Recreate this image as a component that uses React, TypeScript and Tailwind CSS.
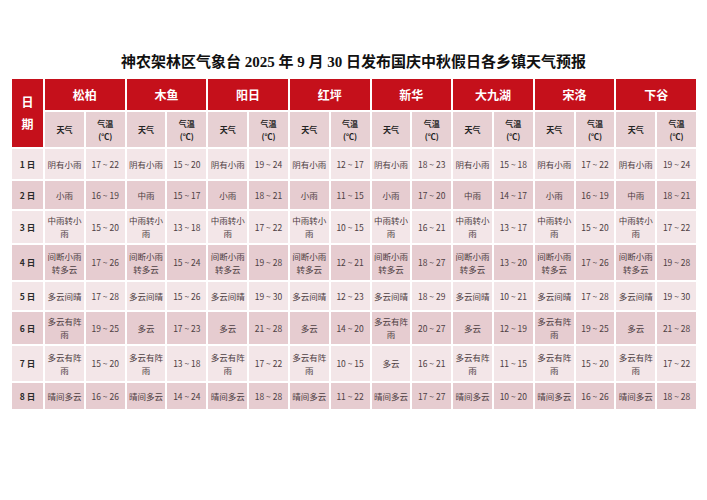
const towns = ['松柏', '木鱼', '阳日', '红坪', '新华', '大九湖', '宋洛', '下谷'];

// each row: [weather, temp] for every town, left to right
const rows: { day: string; h: string; cells: [string, string][] }[] = [
  {
    day: '1日',
    h: 'h-[30px]',
    cells: [
      ['阴有小雨', '17 ~ 22'], ['阴有小雨', '15 ~ 20'], ['阴有小雨', '19 ~ 24'], ['阴有小雨', '12 ~ 17'],
      ['阴有小雨', '18 ~ 23'], ['阴有小雨', '15 ~ 18'], ['阴有小雨', '17 ~ 22'], ['阴有小雨', '19 ~ 24'],
    ],
  },
  {
    day: '2日',
    h: 'h-[28px]',
    cells: [
      ['小雨', '16 ~ 19'], ['中雨', '15 ~ 17'], ['小雨', '18 ~ 21'], ['小雨', '11 ~ 15'],
      ['小雨', '17 ~ 20'], ['中雨', '14 ~ 17'], ['小雨', '16 ~ 19'], ['中雨', '18 ~ 21'],
    ],
  },
  {
    day: '3日',
    h: 'h-[32px]',
    cells: [
      ['中雨转小雨', '15 ~ 20'], ['中雨转小雨', '13 ~ 18'], ['中雨转小雨', '17 ~ 22'], ['中雨转小雨', '10 ~ 15'],
      ['中雨转小雨', '16 ~ 21'], ['中雨转小雨', '13 ~ 17'], ['中雨转小雨', '15 ~ 20'], ['中雨转小雨', '17 ~ 22'],
    ],
  },
  {
    day: '4日',
    h: 'h-[35px]',
    cells: [
      ['间断小雨转多云', '17 ~ 26'], ['间断小雨转多云', '15 ~ 24'], ['间断小雨转多云', '19 ~ 28'], ['间断小雨转多云', '12 ~ 21'],
      ['间断小雨转多云', '18 ~ 27'], ['间断小雨转多云', '13 ~ 20'], ['间断小雨转多云', '17 ~ 26'], ['间断小雨转多云', '19 ~ 28'],
    ],
  },
  {
    day: '5日',
    h: 'h-[28px]',
    cells: [
      ['多云间晴', '17 ~ 28'], ['多云间晴', '15 ~ 26'], ['多云间晴', '19 ~ 30'], ['多云间晴', '12 ~ 23'],
      ['多云间晴', '18 ~ 29'], ['多云间晴', '10 ~ 21'], ['多云间晴', '17 ~ 28'], ['多云间晴', '19 ~ 30'],
    ],
  },
  {
    day: '6日',
    h: 'h-[32px]',
    cells: [
      ['多云有阵雨', '19 ~ 25'], ['多云', '17 ~ 23'], ['多云', '21 ~ 28'], ['多云', '14 ~ 20'],
      ['多云有阵雨', '20 ~ 27'], ['多云', '12 ~ 19'], ['多云有阵雨', '19 ~ 25'], ['多云', '21 ~ 28'],
    ],
  },
  {
    day: '7日',
    h: 'h-[35px]',
    cells: [
      ['多云有阵雨', '15 ~ 20'], ['多云有阵雨', '13 ~ 18'], ['多云有阵雨', '17 ~ 22'], ['多云有阵雨', '10 ~ 15'],
      ['多云', '16 ~ 21'], ['多云有阵雨', '11 ~ 15'], ['多云有阵雨', '15 ~ 20'], ['多云有阵雨', '17 ~ 22'],
    ],
  },
  {
    day: '8日',
    h: 'h-[26px]',
    cells: [
      ['晴间多云', '16 ~ 26'], ['晴间多云', '14 ~ 24'], ['晴间多云', '18 ~ 28'], ['晴间多云', '11 ~ 22'],
      ['晴间多云', '17 ~ 27'], ['晴间多云', '10 ~ 20'], ['晴间多云', '16 ~ 26'], ['晴间多云', '18 ~ 28'],
    ],
  },
];

export default function App() {
  return (
    <div
      className="w-[707px] h-[500px] bg-white overflow-hidden"
      style={{ fontFamily: '"Noto Sans CJK SC", "Noto Sans", sans-serif' }}
    >
      {/* Title */}
      <h1
        className="pt-[52px] h-[79px] text-center text-[15px] leading-[20px] font-semibold text-[#111]"
        style={{ fontFamily: '"Liberation Serif", "Noto Sans CJK SC", serif' }}
      >
        神农架林区气象台 2025 年 9 月 30 日发布国庆中秋假日各乡镇天气预报
      </h1>

      {/* Table */}
      <div className="ml-[12px] w-[684px] flex flex-col gap-[2px]">
        {/* Header */}
        <div className="flex gap-[2px]">
          <div className="w-[31px] shrink-0 h-[68px] bg-[#c5101b] flex flex-col items-center justify-center gap-[10px] text-white font-bold text-[12px] leading-none">
            <span>日</span>
            <span>期</span>
          </div>
          <div className="flex-1 grid grid-cols-8 gap-[2px]">
            {towns.map((t) => (
              <div
                key={t}
                className="h-[31px] bg-[#c5101b] flex items-center justify-center text-white font-bold text-[12px]"
              >
                {t}
              </div>
            ))}
            {towns.map((t) => (
              <div key={t + '-sub'} className="h-[35px] grid grid-cols-2 gap-[2px]">
                <div className="bg-[#e7d0d3] flex items-center justify-center text-[8px] font-bold text-[#222]">
                  天气
                </div>
                <div className="bg-[#e7d0d3] flex flex-col items-center justify-center text-[8px] leading-[13px] font-bold text-[#222]">
                  <span>气温</span>
                  <span>(℃)</span>
                </div>
              </div>
            ))}
          </div>
        </div>

        {/* Data rows */}
        {rows.map((r, i) => {
          const bg = i % 2 === 0 ? 'bg-[#f3e6e8]' : 'bg-[#e6ccd0]';
          return (
            <div key={r.day} className={`flex gap-[2px] ${r.h}`}>
              <div
                className={`w-[31px] shrink-0 ${bg} flex items-center justify-center text-[8.5px] font-bold text-[#2a2a2a]`}
              >
                {r.day.replace('日', ' 日')}
              </div>
              <div className="flex-1 grid grid-cols-16 gap-[2px]">
                {r.cells.map(([w, t], j) => [
                  <div
                    key={j + 'w'}
                    className={`${bg} flex items-center justify-center text-center px-[1px] text-[8.5px] leading-[13px] text-[#4e4043]`}
                  >
                    {w}
                  </div>,
                  <div
                    key={j + 't'}
                    className={`${bg} flex items-center justify-center text-[8.5px] text-[#4e4043] whitespace-nowrap`}
                  >
                    {t}
                  </div>,
                ])}
              </div>
            </div>
          );
        })}
      </div>
    </div>
  );
}
